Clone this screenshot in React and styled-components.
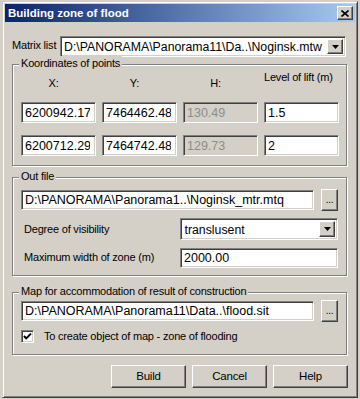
import React from 'react';
import styled, { createGlobalStyle } from 'styled-components';

const FACE = '#d4d0c8';

const GlobalStyle = createGlobalStyle`
  html, body {
    margin: 0;
    padding: 0;
    background: ${FACE};
  }
  body {
    width: 360px;
    height: 399px;
    overflow: hidden;
    font-family: "Liberation Sans", Arial, sans-serif;
    font-size: 11px;
    letter-spacing: -0.2px;
    color: #000;
  }
`;

const Window = styled.div`
  box-sizing: border-box;
  margin: 1px 0 0 2px;
  width: 356px;
  height: 397px;
  padding: 2px;
  background: ${FACE};
  border: 1px solid;
  border-color: ${FACE} #404040 #404040 ${FACE};
  box-shadow: inset 1px 1px #fff, inset -1px -1px #808080;
  display: flex;
  flex-direction: column;
`;

const TitleBar = styled.div`
  height: 18px;
  display: flex;
  align-items: center;
  justify-content: space-between;
  padding: 0 2px 0 3px;
  background: linear-gradient(to right, #0a246a, #a6caf0);
`;

const TitleText = styled.span`
  color: #fff;
  font-weight: bold;
  font-size: 11.5px;
  letter-spacing: 0;
  line-height: 18px;
`;

const raised = `
  border: 1px solid;
  border-color: #fff #404040 #404040 #fff;
  box-shadow: inset -1px -1px #808080;
  background: ${FACE};
`;

const sunken = `
  border: 1px solid;
  border-color: #808080 #fff #fff #808080;
  box-shadow: inset 1px 1px #404040, inset -1px -1px ${FACE};
`;

const CloseButton = styled.div`
  box-sizing: border-box;
  width: 16px;
  height: 14px;
  ${raised}
  display: flex;
  align-items: center;
  justify-content: center;
`;

const Body = styled.div`
  display: flex;
  flex-direction: column;
  padding: 0 7px;
`;

const MatrixRow = styled.div`
  margin-top: 14px;
  height: 21px;
  display: flex;
  align-items: center;
`;

const MatrixLabel = styled.span`
  width: 48px;
  line-height: 15px;
  margin-top: -3px;
  white-space: nowrap;
`;

const Combo = styled.div`
  box-sizing: border-box;
  width: ${(p) => p.$width}px;
  height: ${(p) => p.$height || 21}px;
  ${sunken}
  background: #fff;
  display: flex;
  align-items: stretch;
  padding: 2px;
`;

const ComboText = styled.div`
  flex: 1;
  font-size: 12.3px;
  letter-spacing: 0;
  line-height: ${(p) => p.$lh || 17}px;
  padding-left: 1px;
  white-space: nowrap;
  overflow: hidden;
`;

const ArrowButton = styled.div`
  box-sizing: border-box;
  width: 16px;
  ${raised}
  display: flex;
  align-items: center;
  justify-content: center;
`;

const GroupBox = styled.div`
  position: relative;
  box-sizing: border-box;
  width: 335px;
  height: ${(p) => p.$height}px;
  margin-top: ${(p) => p.$top}px;
  border: 1px solid #808080;
  box-shadow: inset 1px 1px #fff, 1px 1px #fff;
  padding: ${(p) => p.$pad || '0 8px'};
`;

const GroupTitle = styled.span`
  position: absolute;
  top: -9px;
  left: 6px;
  padding: 0 2px;
  background: ${FACE};
  line-height: 15px;
  white-space: nowrap;
`;

const CoordGrid = styled.div`
  display: grid;
  grid-template-columns: repeat(4, 75px);
  grid-template-rows: 25px 21px 21px;
  column-gap: 6px;
  row-gap: 12px;
`;

const ColLabel = styled.div`
  padding-top: ${(p) => p.$top}px;
  padding-right: ${(p) => (p.$left ? 0 : 10)}px;
  text-align: ${(p) => (p.$left ? 'left' : 'center')};
  line-height: 15px;
  white-space: nowrap;
`;

const Field = styled.input`
  box-sizing: border-box;
  width: ${(p) => (p.$width ? `${p.$width}px` : '100%')};
  height: ${(p) => p.$height || 21}px;
  margin: 0;
  ${sunken}
  padding: 0 5px 0 3px;
  font-family: "Liberation Sans", Arial, sans-serif;
  font-size: 12.5px;
  color: ${(p) => (p.disabled ? '#8c8c8c' : '#000')};
  background: ${(p) => (p.disabled ? FACE : '#fff')};
  outline: none;
`;

const Rows = styled.div`
  display: flex;
  flex-direction: column;
  gap: 7px;
`;

const FieldRow = styled.div`
  display: flex;
  align-items: center;
  justify-content: space-between;
  height: ${(p) => p.$height}px;
`;

const RowLabel = styled.span`
  width: 157px;
  padding-left: 3px;
  line-height: 15px;
  white-space: nowrap;
`;

const BrowseButton = styled.div`
  box-sizing: border-box;
  width: 17px;
  height: 22px;
  ${raised}
  display: flex;
  align-items: flex-end;
  justify-content: center;
  font-size: 10px;
  line-height: 12px;
  padding-bottom: 4px;
`;

const CheckRow = styled.div`
  display: flex;
  align-items: center;
  height: 15px;
`;

const CheckBox = styled.div`
  box-sizing: border-box;
  width: 13px;
  height: 13px;
  ${sunken}
  background: #fff;
  display: flex;
  align-items: center;
  justify-content: center;
`;

const CheckLabel = styled.span`
  margin-left: 10px;
  line-height: 15px;
`;

const ButtonRow = styled.div`
  margin-top: 10px;
  display: flex;
  justify-content: flex-end;
  gap: 6px;
`;

const Button = styled.div`
  box-sizing: border-box;
  width: 75px;
  height: 23px;
  ${raised}
  display: flex;
  align-items: center;
  justify-content: center;
  font-size: 11.5px;
  line-height: 15px;
`;

const Arrow = () => (
  <svg width="7" height="4" viewBox="0 0 7 4">
    <polygon points="0,0 7,0 3.5,4" fill="#000" />
  </svg>
);

const Cross = () => (
  <svg width="8" height="7" viewBox="0 0 8 7">
    <path d="M0.5 0.5 L7.5 6.5 M7.5 0.5 L0.5 6.5" stroke="#000" strokeWidth="1.6" />
  </svg>
);

const Check = () => (
  <svg width="9" height="9" viewBox="0 0 9 9">
    <polyline points="1,4 3.2,6.4 8,1.6" fill="none" stroke="#000" strokeWidth="2" />
  </svg>
);

const points = [
  { x: '6200942.17', y: '7464462.48', h: '130.49', lift: '1.5' },
  { x: '6200712.29', y: '7464742.48', h: '129.73', lift: '2' },
];

export default function App() {
  return (
    <>
      <GlobalStyle />
      <Window>
        <TitleBar>
          <TitleText>Building zone of flood</TitleText>
          <CloseButton>
            <Cross />
          </CloseButton>
        </TitleBar>
        <Body>
          <MatrixRow>
            <MatrixLabel>Matrix list</MatrixLabel>
            <Combo $width={286}>
              <ComboText>D:\PANORAMA\Panorama11\Da..\Noginsk.mtw</ComboText>
              <ArrowButton>
                <Arrow />
              </ArrowButton>
            </Combo>
          </MatrixRow>

          <GroupBox $top={7} $height={102}>
            <GroupTitle>Koordinates of points</GroupTitle>
            <CoordGrid>
              <ColLabel $top={11}>X:</ColLabel>
              <ColLabel $top={11}>Y:</ColLabel>
              <ColLabel $top={11}>H:</ColLabel>
              <ColLabel $top={5} $left>
                Level of lift (m)
              </ColLabel>
              {points.map((p) => (
                <React.Fragment key={p.x}>
                  <Field readOnly value={p.x} />
                  <Field readOnly value={p.y} />
                  <Field disabled value={p.h} />
                  <Field readOnly value={p.lift} />
                </React.Fragment>
              ))}
            </CoordGrid>
          </GroupBox>

          <GroupBox $top={11} $height={99} $pad="11px 8px 0">
            <GroupTitle>Out file</GroupTitle>
            <Rows>
              <FieldRow $height={22}>
                <Field readOnly $width={293} $height={20} value="D:\PANORAMA\Panorama1..\Noginsk_mtr.mtq" />
                <BrowseButton>...</BrowseButton>
              </FieldRow>
              <FieldRow $height={22}>
                <RowLabel>Degree of visibility</RowLabel>
                <Combo $width={158} $height={22}>
                  <ComboText $lh={18}>translusent</ComboText>
                  <ArrowButton>
                    <Arrow />
                  </ArrowButton>
                </Combo>
              </FieldRow>
              <FieldRow $height={21}>
                <RowLabel>Maximum width of zone (m)</RowLabel>
                <Field readOnly $width={158} $height={20} value="2000.00" />
              </FieldRow>
            </Rows>
          </GroupBox>

          <GroupBox $top={16} $height={63} $pad="7px 8px 0">
            <GroupTitle>Map for accommodation of result of construction</GroupTitle>
            <Rows>
              <FieldRow $height={22}>
                <Field readOnly $width={293} $height={20} value="D:\PANORAMA\Panorama11\Data..\flood.sit" />
                <BrowseButton>...</BrowseButton>
              </FieldRow>
              <CheckRow>
                <CheckBox>
                  <Check />
                </CheckBox>
                <CheckLabel>To create object of map - zone of flooding</CheckLabel>
              </CheckRow>
            </Rows>
          </GroupBox>

          <ButtonRow>
            <Button>Build</Button>
            <Button>Cancel</Button>
            <Button>Help</Button>
          </ButtonRow>
        </Body>
      </Window>
    </>
  );
}
